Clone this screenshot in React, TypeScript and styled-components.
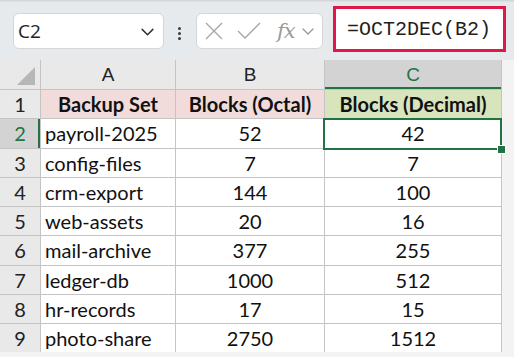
import React from "react";
import styled, { createGlobalStyle } from "styled-components";

const Global = createGlobalStyle`
  html, body { margin: 0; padding: 0; background: #f3f3f3; }
  body { font-family: "Lato", "Noto Sans", sans-serif; }
`;

const Page = styled.div`
  width: 514px;
  height: 357px;
  overflow: hidden;
  background: #f3f3f3;
`;

const Toolbar = styled.div`
  height: 60px;
  background: #e7eaed;
  box-shadow: inset 0 2px 2px -1px rgba(0,0,0,.12);
  display: flex;
  align-items: flex-start;
  box-sizing: border-box;
  padding-left: 13px;
`;

const NameBox = styled.div`
  margin-top: 13px;
  width: 151px;
  height: 36px;
  box-sizing: border-box;
  background: #fff;
  border: 1px solid #d4d6d8;
  border-radius: 6px;
  display: flex;
  align-items: center;
  justify-content: space-between;
  padding: 0 8px 0 4px;
  font-family: "Open Sans", "Noto Sans", sans-serif;
  font-size: 19px;
  color: #222;
`;

const Dots = styled.div`
  margin: 27px 0 0 14px;
  width: 4px;
  display: flex;
  flex-direction: column;
  gap: 2px;

  span {
    width: 3px;
    height: 3px;
    border-radius: 50%;
    background: #3a3a3a;
  }
`;

const FxBox = styled.div`
  margin: 13px 0 0 14px;
  width: 127px;
  height: 36px;
  box-sizing: border-box;
  background: #fff;
  border: 1px solid #d4d6d8;
  border-radius: 6px;
  display: flex;
  align-items: center;
  padding-left: 8px;
  gap: 14px;
  color: #a0a0a0;
`;

const FxGroup = styled.span`
  display: flex;
  align-items: center;
  gap: 6px;
`;

const Fx = styled.span`
  font-family: "DejaVu Serif", "Liberation Serif", serif;
  font-style: italic;
  font-size: 21px;
  color: #9a9a9a;
  margin-left: 2px;
  letter-spacing: -1px;
`;

const FormulaBox = styled.div`
  margin: 6px 0 0 10px;
  width: 173px;
  height: 46px;
  box-sizing: border-box;
  background: #fff;
  border: 3px solid #e0184a;
  display: flex;
  align-items: center;
  padding-left: 11px;
  font-family: "Liberation Mono", "DejaVu Sans Mono", monospace;
  font-size: 20px;
  color: #1e1e1e;
`;

const Sheet = styled.div`
  display: grid;
  grid-template-columns: 40px 134px 148px 176px;
  grid-template-rows: 29px repeat(9, 28.25px);
  gap: 1px;
  width: 501px;
  background: #c4c4c4;
  border-right: 1px solid #c4c4c4;
  box-sizing: content-box;
`;

const Corner = styled.div`
  background: #e9e9e9;
  position: relative;

  &::after {
    content: "";
    position: absolute;
    right: 5px;
    bottom: 4px;
    border-left: 18px solid transparent;
    border-bottom: 18px solid #b7b7b7;
  }
`;

const ColHead = styled.div<{ $active?: boolean }>`
  background: ${p => (p.$active ? "#d3d3d3" : "#e9e9e9")};
  color: ${p => (p.$active ? "#217346" : "#222")};
  box-shadow: ${p => (p.$active ? "inset 0 -2px 0 #217346" : "none")};
  display: flex;
  align-items: center;
  justify-content: center;
  font-family: "Liberation Sans", "Noto Sans", sans-serif;
  font-size: 19px;
`;

const RowHead = styled.div<{ $active?: boolean }>`
  background: ${p => (p.$active ? "#d3d3d3" : "#e9e9e9")};
  color: ${p => (p.$active ? "#217346" : "#222")};
  box-shadow: ${p => (p.$active ? "inset -2px 0 0 #217346" : "none")};
  display: flex;
  align-items: center;
  justify-content: center;
  font-size: 20px;
`;

const Cell = styled.div<{ $align?: "left" | "center"; $bg?: string; $bold?: boolean }>`
  position: relative;
  background: ${p => p.$bg || "#fff"};
  display: flex;
  align-items: center;
  justify-content: ${p => (p.$align === "left" ? "flex-start" : "center")};
  padding-left: ${p => (p.$align === "left" ? "4px" : "0")};
  font-size: 20px;
  font-weight: ${p => (p.$bold ? 700 : 400)};
  color: #111;
  white-space: nowrap;
`;

const Selection = styled.div`
  position: absolute;
  z-index: 2;
  inset: -1px -1px -2px -2px;
  border: 2px solid #217346;
  pointer-events: none;

  &::after {
    content: "";
    position: absolute;
    right: -6px;
    bottom: -6px;
    width: 7px;
    height: 7px;
    background: #217346;
    border: 1px solid #fff;
  }
`;

const rows = [
  ["payroll-2025", "52", "42"],
  ["config-files", "7", "7"],
  ["crm-export", "144", "100"],
  ["web-assets", "20", "16"],
  ["mail-archive", "377", "255"],
  ["ledger-db", "1000", "512"],
  ["hr-records", "17", "15"],
  ["photo-share", "2750", "1512"],
];

function Chevron({ size = 14, color = "#333" }: { size?: number; color?: string }) {
  return (
    <svg width={size} height={size} viewBox="0 0 14 14" fill="none">
      <path d="M2 5l5 5 5-5" stroke={color} strokeWidth="1.4" strokeLinecap="round" strokeLinejoin="round" />
    </svg>
  );
}

export default function App() {
  return (
    <Page>
      <Global />
      <Toolbar>
        <NameBox>
          <span>C2</span>
          <Chevron size={15} />
        </NameBox>
        <Dots><span /><span /><span /></Dots>
        <FxBox>
          <svg width="18" height="18" viewBox="0 0 18 18">
            <path d="M1 1l16 16M17 1L1 17" stroke="#a8a8a8" strokeWidth="1.4" />
          </svg>
          <svg width="24" height="18" viewBox="0 0 24 18">
            <path d="M1 9l7 7L23 1" stroke="#a8a8a8" strokeWidth="1.4" fill="none" />
          </svg>
          <FxGroup>
            <Fx>fx</Fx>
            <Chevron size={14} color="#9a9a9a" />
          </FxGroup>
        </FxBox>
        <FormulaBox>=OCT2DEC(B2)</FormulaBox>
      </Toolbar>
      <Sheet>
        <Corner />
        <ColHead>A</ColHead>
        <ColHead>B</ColHead>
        <ColHead $active>C</ColHead>

        <RowHead>1</RowHead>
        <Cell $bg="#f2dcdb" $bold>Backup Set</Cell>
        <Cell $bg="#f2dcdb" $bold>Blocks (Octal)</Cell>
        <Cell $bg="#d8e4bc" $bold>Blocks (Decimal)</Cell>

        {rows.map((r, i) => (
          <React.Fragment key={i}>
            <RowHead $active={i === 0}>{i + 2}</RowHead>
            <Cell $align="left">{r[0]}</Cell>
            <Cell>{r[1]}</Cell>
            <Cell>
              {r[2]}
              {i === 0 && <Selection />}
            </Cell>
          </React.Fragment>
        ))}
      </Sheet>
    </Page>
  );
}
